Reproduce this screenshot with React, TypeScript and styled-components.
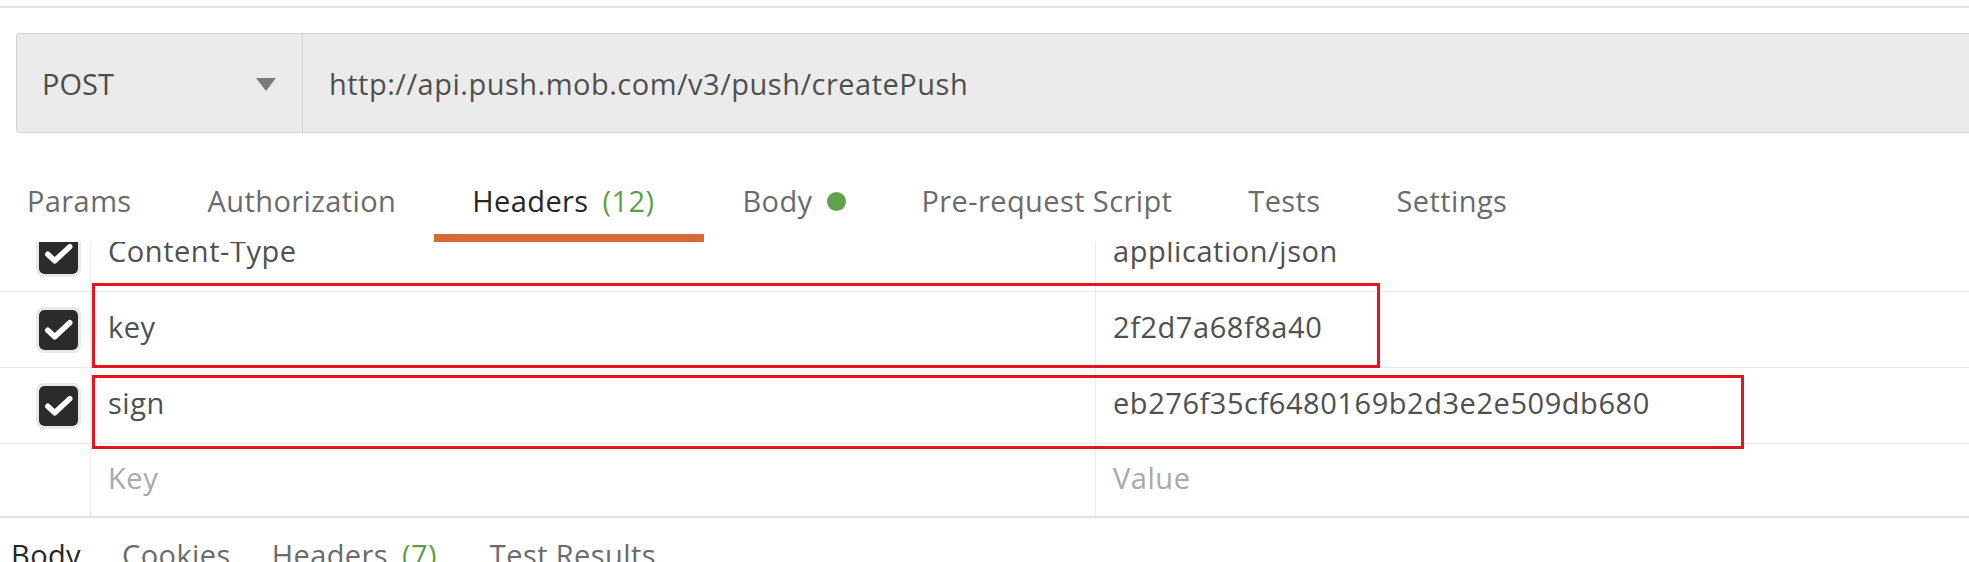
import React from 'react';
import styled, { createGlobalStyle } from 'styled-components';

const GlobalStyle = createGlobalStyle`
  html, body {
    margin: 0;
    padding: 0;
    background: #ffffff;
  }
  body {
    font-family: "Open Sans", "Noto Sans", sans-serif;
    overflow: hidden;
  }
  * {
    box-sizing: border-box;
  }
`;

const Page = styled.div`
  width: 1969px;
  height: 562px;
  overflow: hidden;
  padding-top: 6px;
  font-size: 29px;
  color: #505050;
`;

const TopRule = styled.div`
  height: 2px;
  background: #e4e4e4;
`;

const UrlBar = styled.div`
  display: flex;
  height: 100px;
  margin: 25px 0 0 16px;
  background: #ebebeb;
  border: 1px solid #d2d2d2;
  border-right: none;
  border-radius: 4px 0 0 4px;
`;

const MethodSelect = styled.div`
  display: flex;
  align-items: center;
  justify-content: space-between;
  width: 286px;
  padding: 0 26px 0 25px;
  border-right: 1px solid #d5d5d5;
  color: #4c4c4c;
`;

const Caret = styled.span`
  width: 0;
  height: 0;
  border-left: 10px solid transparent;
  border-right: 10px solid transparent;
  border-top: 13px solid #7a7a7a;
  margin-top: 2px;
`;

const UrlText = styled.div`
  display: flex;
  align-items: center;
  padding-left: 26px;
  letter-spacing: 0.5px;
  color: #4f4f4f;
`;

const TabBar = styled.div`
  display: flex;
`;

const Tab = styled.div<{ $active?: boolean }>`
  display: flex;
  align-items: center;
  gap: 14px;
  padding: 48px 38px 13px;
  line-height: 40px;
  letter-spacing: 0.4px;
  white-space: nowrap;
  color: ${p => (p.$active ? '#262626' : '#6b6b6b')};
  border-bottom: 8px solid ${p => (p.$active ? '#d5693a' : 'transparent')};

  &:first-child {
    padding-left: 27px;
  }
`;

const Count = styled.span`
  color: #5d9f48;
  margin-right: 12px;
`;

const Dot = styled.span`
  width: 19px;
  height: 19px;
  border-radius: 50%;
  background: #62a14b;
`;

const TableViewport = styled.div`
  position: relative;
  height: 276px;
  overflow: hidden;
  border-bottom: 2px solid #e2e2e2;
`;

const Rows = styled.div`
  margin-top: -26px;
`;

const Row = styled.div<{ $last?: boolean }>`
  display: flex;
  height: ${p => (p.$last ? '72px' : '76px')};
  border-bottom: ${p => (p.$last ? 'none' : '1px solid #e8e8e8')};
`;

const CheckCell = styled.div`
  display: flex;
  align-items: center;
  width: 91px;
  padding-left: 36px;
  border-right: 1px solid #ececec;
`;

const CheckBox = styled.span`
  display: flex;
  align-items: center;
  justify-content: center;
  width: 45px;
  height: 46px;
  border: 3px solid #e9e9e9;
  border-radius: 8px;
  background: #2b2b2b;
  background-clip: padding-box;
`;

const Cell = styled.div<{ $placeholder?: boolean; $grow?: boolean }>`
  display: flex;
  align-items: center;
  padding: 0 0 6px 17px;
  letter-spacing: 0.55px;
  white-space: nowrap;
  color: ${p => (p.$placeholder ? '#a9a9a9' : '#505050')};
  ${p => (p.$grow ? 'flex: 1;' : 'width: 1005px; border-right: 1px solid #ececec;')}
`;

const Highlight = styled.div<{ $top: number; $width: number; $height: number }>`
  position: absolute;
  left: 92px;
  top: ${p => p.$top}px;
  width: ${p => p.$width}px;
  height: ${p => p.$height}px;
  border: 3px solid #e8141d;
  pointer-events: none;
`;

const ResponseTabs = styled.div`
  display: flex;
  gap: 41px;
  padding: 17px 0 0 11px;
  line-height: 40px;
  letter-spacing: 0.4px;
`;

const ResponseTab = styled.span<{ $active?: boolean }>`
  display: inline-flex;
  gap: 14px;
  color: ${p => (p.$active ? '#262626' : '#6b6b6b')};
  white-space: nowrap;
`;

const Check = () => (
  <svg width="30" height="30" viewBox="0 0 24 24" fill="none">
    <path d="M3 12.2l5.6 5.2L20.6 6.2" stroke="#ffffff" strokeWidth="4.4" strokeLinecap="round" strokeLinejoin="round" />
  </svg>
);

type Header = { key: string; value: string };

const headers: Header[] = [
  { key: 'Content-Type', value: 'application/json' },
  { key: 'key', value: '2f2d7a68f8a40' },
  { key: 'sign', value: 'eb276f35cf6480169b2d3e2e509db680' },
];

const requestTabs = ['Params', 'Authorization', 'Headers', 'Body', 'Pre-request Script', 'Tests', 'Settings'];

export default function App() {
  return (
    <Page>
      <GlobalStyle />
      <TopRule />
      <UrlBar>
        <MethodSelect>
          <span>POST</span>
          <Caret />
        </MethodSelect>
        <UrlText>http://api.push.mob.com/v3/push/createPush</UrlText>
      </UrlBar>

      <TabBar>
        {requestTabs.map(name => (
          <Tab key={name} $active={name === 'Headers'}>
            {name}
            {name === 'Headers' && <Count>(12)</Count>}
            {name === 'Body' && <Dot />}
          </Tab>
        ))}
      </TabBar>

      <TableViewport>
        <Rows>
          {headers.map(h => (
            <Row key={h.key}>
              <CheckCell>
                <CheckBox>
                  <Check />
                </CheckBox>
              </CheckCell>
              <Cell>{h.key}</Cell>
              <Cell $grow>{h.value}</Cell>
            </Row>
          ))}
          <Row $last>
            <CheckCell />
            <Cell $placeholder>Key</Cell>
            <Cell $placeholder $grow>Value</Cell>
          </Row>
        </Rows>
        <Highlight $top={41} $width={1288} $height={85} />
        <Highlight $top={133} $width={1652} $height={74} />
      </TableViewport>

      <ResponseTabs>
        <ResponseTab $active>Body</ResponseTab>
        <ResponseTab>Cookies</ResponseTab>
        <ResponseTab>
          Headers
          <Count>(7)</Count>
        </ResponseTab>
        <ResponseTab>Test Results</ResponseTab>
      </ResponseTabs>
    </Page>
  );
}
